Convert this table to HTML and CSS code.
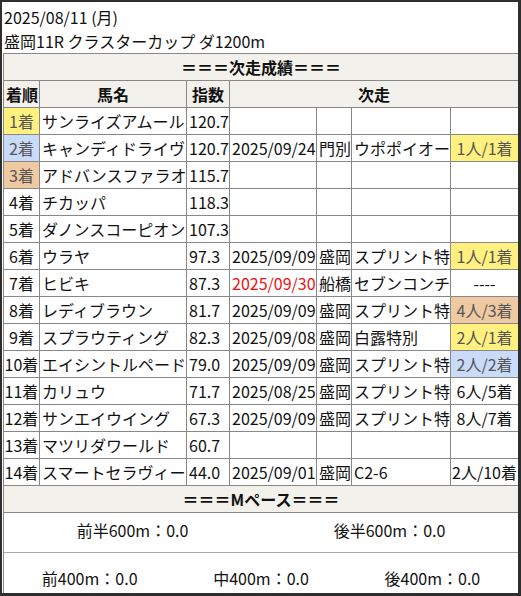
FILE: index.html
```html
<!DOCTYPE html>
<html lang="ja">
<head>
<meta charset="utf-8">
<link rel="stylesheet" href="styles.css">
</head>
<body>
<div class="frame">
  <div class="title">
    <div>2025/08/11 (月)</div>
    <div>盛岡11R クラスターカップ ダ1200m</div>
  </div>
  <table class="grid">
    <colgroup>
      <col class="c-rank"><col class="c-name"><col class="c-idx"><col class="c-date"><col class="c-place"><col class="c-race"><col class="c-res">
    </colgroup>
    <tr><th colspan="7" class="band">＝＝＝次走成績＝＝＝</th></tr>
    <tr class="head"><th class="l">着順</th><th>馬名</th><th>指数</th><th colspan="4">次走</th></tr>
    <tr><td class="rank y">1着</td><td>サンライズアムール</td><td>120.7</td><td></td><td></td><td></td><td></td></tr>
    <tr><td class="rank b">2着</td><td>キャンディドライヴ</td><td>120.7</td><td>2025/09/24</td><td>門別</td><td>ウポポイオー</td><td class="res y">1人/1着</td></tr>
    <tr><td class="rank o">3着</td><td>アドバンスファラオ</td><td>115.7</td><td></td><td></td><td></td><td></td></tr>
    <tr><td class="rank">4着</td><td>チカッパ</td><td>118.3</td><td></td><td></td><td></td><td></td></tr>
    <tr><td class="rank">5着</td><td>ダノンスコーピオン</td><td>107.3</td><td></td><td></td><td></td><td></td></tr>
    <tr><td class="rank">6着</td><td>ウラヤ</td><td>97.3</td><td>2025/09/09</td><td>盛岡</td><td>スプリント特</td><td class="res y">1人/1着</td></tr>
    <tr><td class="rank">7着</td><td>ヒビキ</td><td>87.3</td><td class="red">2025/09/30</td><td>船橋</td><td>セブンコンチ</td><td class="res">----</td></tr>
    <tr><td class="rank">8着</td><td>レディブラウン</td><td>81.7</td><td>2025/09/09</td><td>盛岡</td><td>スプリント特</td><td class="res o">4人/3着</td></tr>
    <tr><td class="rank">9着</td><td>スプラウティング</td><td>82.3</td><td>2025/09/08</td><td>盛岡</td><td>白露特別</td><td class="res y">2人/1着</td></tr>
    <tr><td class="rank">10着</td><td>エイシントルペード</td><td>79.0</td><td>2025/09/09</td><td>盛岡</td><td>スプリント特</td><td class="res b">2人/2着</td></tr>
    <tr><td class="rank">11着</td><td>カリュウ</td><td>71.7</td><td>2025/08/25</td><td>盛岡</td><td>スプリント特</td><td class="res">6人/5着</td></tr>
    <tr><td class="rank">12着</td><td>サンエイウイング</td><td>67.3</td><td>2025/09/09</td><td>盛岡</td><td>スプリント特</td><td class="res">8人/7着</td></tr>
    <tr><td class="rank">13着</td><td>マツリダワールド</td><td>60.7</td><td></td><td></td><td></td><td></td></tr>
    <tr><td class="rank">14着</td><td>スマートセラヴィー</td><td>44.0</td><td>2025/09/01</td><td>盛岡</td><td>C2-6</td><td class="res">2人/10着</td></tr>
    <tr><th colspan="7" class="band">＝＝＝Mペース＝＝＝</th></tr>
    <tr>
      <td colspan="7" class="pace">
        <div class="pace-row first">
          <span>前半600m：0.0</span>
          <span>後半600m：0.0</span>
        </div>
        <div class="pace-row second">
          <span>前400m：0.0</span>
          <span>中400m：0.0</span>
          <span>後400m：0.0</span>
        </div>
      </td>
    </tr>
  </table>
</div>
</body>
</html>
```

FILE: styles.css
```css
html, body {
  margin: 0;
  padding: 0;
  background: #ffffff;
}

body {
  font-family: "Noto Sans CJK JP", "Noto Sans", sans-serif;
  font-size: 16px;
  color: #111111;
}

.frame {
  width: 521px;
  height: 596px;
  box-sizing: border-box;
  border: 2px solid #2e2e2e;
  border-right-width: 3px;
  border-bottom-width: 3px;
  overflow: hidden;
  background: #ffffff;
}

.title {
  padding: 3px 2px 0 2px;
  height: 48px;
  line-height: 24px;
  white-space: nowrap;
}

.grid {
  border-collapse: collapse;
  table-layout: fixed;
  width: 515px;
  margin-left: 1px;
}

.c-rank { width: 36px; }
.c-name { width: 147px; }
.c-idx { width: 43px; }
.c-date { width: 87px; }
.c-place { width: 35px; }
.c-race { width: 99px; }
.c-res { width: 68px; }

.grid th,
.grid td {
  border: 1px solid #888888;
  padding: 0 2px;
  height: 26px;
  line-height: 26px;
  white-space: nowrap;
  overflow: hidden;
  text-align: left;
  font-weight: normal;
}

.grid th {
  background: #f2f1ec;
  font-weight: bold;
  text-align: center;
}

.grid th.l {
  text-align: left;
}

.grid td.rank {
  text-align: center;
  padding: 0;
}

.grid td.res {
  text-align: center;
  padding: 0;
}

.grid td.y {
  background: #fff080;
  color: #555555;
}

.grid td.b {
  background: #c9dbf9;
  color: #555555;
}

.grid td.o {
  background: #efc9a2;
  color: #555555;
}

.grid td.red {
  color: #ee1111;
}

.grid td.pace {
  padding: 0;
  height: auto;
  line-height: 24px;
}

.pace-row {
  display: grid;
  text-align: center;
}

.pace-row.first {
  grid-template-columns: 1fr 1fr;
  padding: 5px 0 10px 0;
  border-bottom: 1px solid #a8a8a8;
}

.pace-row.second {
  grid-template-columns: 1fr 1fr 1fr;
  padding: 13px 0 3px 0;
}
```
